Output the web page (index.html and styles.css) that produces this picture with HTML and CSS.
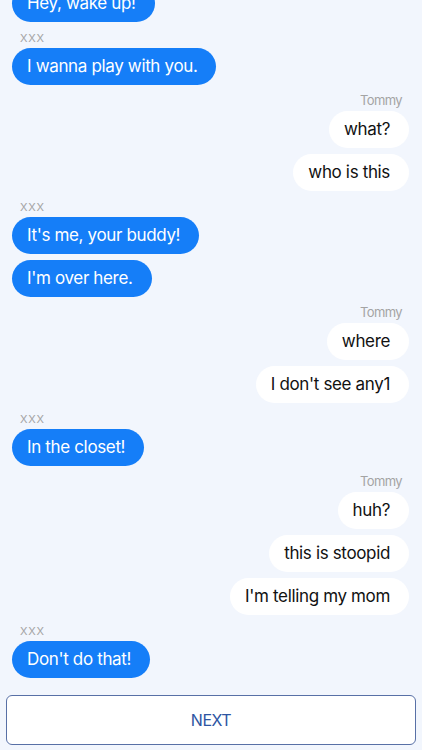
FILE: index.html
```html
<!DOCTYPE html>
<html>
<head>
<meta charset="utf-8">
<link rel="stylesheet" href="styles.css">
</head>
<body>
<div class="chat">
  <div class="msg left first">Hey, wake up!</div>
  <div class="name left">XXX</div>
  <div class="msg left">I wanna play with you.</div>
  <div class="name right">Tommy</div>
  <div class="msg right">what?</div>
  <div class="msg right">who is this</div>
  <div class="name left">XXX</div>
  <div class="msg left">It's me, your buddy!</div>
  <div class="msg left">I'm over here.</div>
  <div class="name right">Tommy</div>
  <div class="msg right">where</div>
  <div class="msg right">I don't see any1</div>
  <div class="name left">XXX</div>
  <div class="msg left">In the closet!</div>
  <div class="name right">Tommy</div>
  <div class="msg right">huh?</div>
  <div class="msg right">this is stoopid</div>
  <div class="msg right">I'm telling my mom</div>
  <div class="name left">XXX</div>
  <div class="msg left">Don't do that!</div>
</div>
<button class="next">NEXT</button>
</body>
</html>
```
FILE: styles.css
```css
html, body {
  margin: 0;
  padding: 0;
}
body {
  background: #f2f6fd;
  font-family: Inter, "Noto Sans", sans-serif;
  width: 422px;
  height: 750px;
  overflow: hidden;
}
.chat {
  display: flex;
  flex-direction: column;
  padding: 0 13px 0 12px;
  margin-top: -15.5px;
}
.msg {
  align-self: flex-start;
  background: #157ef8;
  color: #fff;
  font-size: 17px;
  line-height: 21.5px;
  letter-spacing: -0.35px;
  padding: 8px 19px 8px 15px;
  border-radius: 19px;
  margin-bottom: 5.5px;
  white-space: nowrap;
}
.msg.right {
  align-self: flex-end;
  background: #fff;
  color: #111;
}
.name {
  font-size: 13px;
  line-height: 15px;
  color: #a4a4a4;
  margin: 2px 8px 3px;
}
.name.left {
  align-self: flex-start;
  font-size: 11px;
  letter-spacing: 0.7px;
  line-height: 15px;
  padding-top: 1px;
  margin-bottom: 2px;
}
.name.right {
  align-self: flex-end;
  margin-right: 7px;
  letter-spacing: -0.6px;
}
.next {
  display: block;
  box-sizing: border-box;
  width: 410px;
  height: 50px;
  margin: 11.5px 6px 0;
  background: #fff;
  border: 1.5px solid #5870a6;
  border-radius: 6px;
  color: #2d55a2;
  font-family: Inter, "Noto Sans", sans-serif;
  font-size: 16px;
  letter-spacing: -0.5px;
  padding: 0;
}
```
